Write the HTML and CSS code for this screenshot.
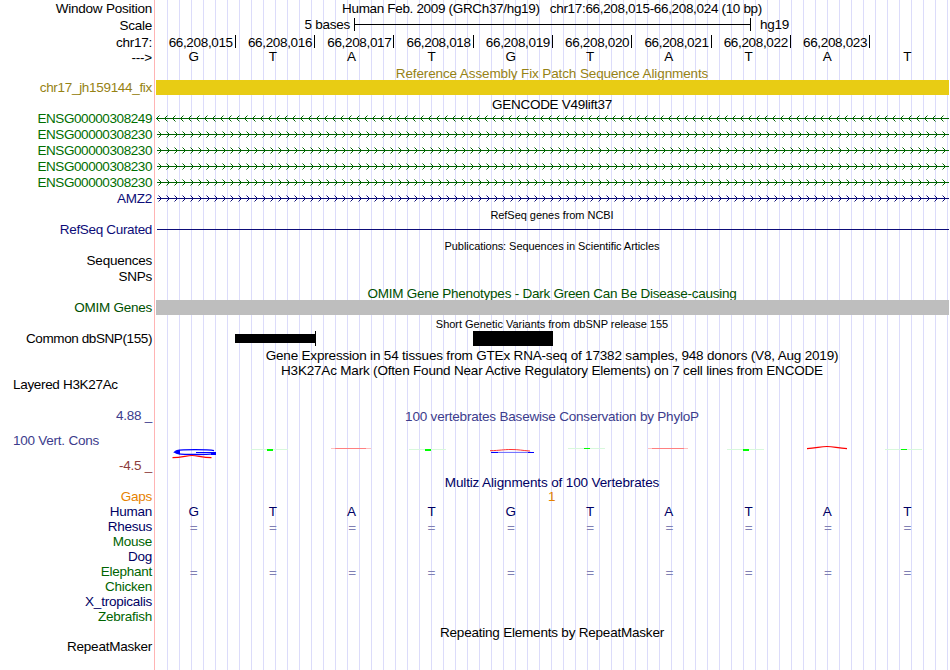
FILE: index.html
```
<!DOCTYPE html>
<html lang="en">
<head>
  <meta charset="UTF-8">
  <title>Human chr17:66,208,015-66,208,024</title>
  <link rel="stylesheet" href="styles.css">
</head>
<body>
  <svg class="defs" width="0" height="0">
    <defs>
      <pattern id="left" width="8" height="7" patternUnits="userSpaceOnUse">
        <path d="M3.5 0.5L0.5 3.5L3.5 6.5" fill="none" stroke="#006400"/>
      </pattern>
      <pattern id="right" width="8" height="7" patternUnits="userSpaceOnUse">
        <path d="M2.5 0.5L5.5 3.5L2.5 6.5" fill="none" stroke="#006400"/>
      </pattern>
      <pattern id="rightBlue" width="8" height="7" patternUnits="userSpaceOnUse">
        <path d="M2.5 0.5L5.5 3.5L2.5 6.5" fill="none" stroke="#0c0c78"/>
      </pattern>
    </defs>
  </svg>

  <div class="browser">
    <!-- position and ruler -->
    <div class="row h17"><div class="label">Window Position</div><div class="title t-pos">Human Feb. 2009 (GRCh37/hg19) &nbsp; chr17:66,208,015-66,208,024 (10 bp)</div></div>
    <div class="row h16"><div class="label low">Scale</div><div class="scale"><span class="bases">5 bases</span><span class="scale-bar"></span><span>hg19</span></div></div>
    <div class="row h17"><div class="label low">chr17:</div>
      <div class="ruler"><span>66,208,015</span><span>66,208,016</span><span>66,208,017</span><span>66,208,018</span><span>66,208,019</span><span>66,208,020</span><span>66,208,021</span><span>66,208,022</span><span>66,208,023</span></div>
    </div>
    <div class="row h16"><div class="label">---&gt;</div>
      <div class="letters top"><span>G</span><span>T</span><span class="a">A</span><span>T</span><span>G</span><span>T</span><span class="a">A</span><span>T</span><span class="a">A</span><span>T</span></div>
    </div>

    <!-- fix patch -->
    <div class="row h14"><div class="label"></div><div class="title low gold t-fix">Reference Assembly Fix Patch Sequence Alignments</div></div>
    <div class="row h15"><div class="label gold t-patch">chr17_jh159144_fix</div><div class="bar yellow"></div></div>

    <!-- genes -->
    <div class="row h16"><div class="label"></div><div class="title t-gencode">GENCODE V49lift37</div></div>
    <div class="row h16"><div class="label green ensg">ENSG00000308249</div><svg class="gene" width="793" height="7"><rect width="793" height="7" fill="url(#left)"/><rect y="3" width="793" height="1" fill="#006400"/></svg></div>
    <div class="row h16"><div class="label green ensg">ENSG00000308230</div><svg class="gene" width="793" height="7"><rect width="793" height="7" fill="url(#right)"/><rect x="1" y="3" width="792" height="1" fill="#006400"/></svg></div>
    <div class="row h16"><div class="label green ensg">ENSG00000308230</div><svg class="gene" width="793" height="7"><rect width="793" height="7" fill="url(#right)"/><rect x="1" y="3" width="792" height="1" fill="#006400"/></svg></div>
    <div class="row h16"><div class="label green ensg">ENSG00000308230</div><svg class="gene" width="793" height="7"><rect width="793" height="7" fill="url(#right)"/><rect x="1" y="3" width="792" height="1" fill="#006400"/></svg></div>
    <div class="row h16"><div class="label green ensg">ENSG00000308230</div><svg class="gene" width="793" height="7"><rect width="793" height="7" fill="url(#right)"/><rect x="1" y="3" width="792" height="1" fill="#006400"/></svg></div>
    <div class="row h16"><div class="label blue">AMZ2</div><svg class="gene" width="793" height="7"><rect width="793" height="7" fill="url(#rightBlue)"/><rect x="1" y="3" width="792" height="1" fill="#0c0c78"/></svg></div>
    <div class="row h15"><div class="label"></div><div class="title low small t-ncbi">RefSeq genes from NCBI</div></div>
    <div class="row h16"><div class="label blue t-curated">RefSeq Curated</div><div class="line"></div></div>
    <div class="row h15"><div class="label"></div><div class="title low small t-pub">Publications: Sequences in Scientific Articles</div></div>
    <div class="row h16"><div class="label">Sequences</div></div>
    <div class="row h16"><div class="label">SNPs</div></div>

    <!-- variants -->
    <div class="row h15"><div class="label"></div><div class="title low omim">OMIM Gene Phenotypes - Dark Green Can Be Disease-causing</div></div>
    <div class="row h15"><div class="label omim">OMIM Genes</div><div class="bar gray"></div></div>
    <div class="row h16"><div class="label"></div><div class="title low small t-snp">Short Genetic Variants from dbSNP release 155</div></div>
    <div class="row h15"><div class="label t-common">Common dbSNP(155)</div><div class="snps"><span class="snp thin"></span><span class="snp tick"></span><span class="snp wide"></span></div></div>
    <div class="row h17"><div class="label"></div><div class="title low t-gtex">Gene Expression in 54 tissues from GTEx RNA-seq of 17382 samples, 948 donors (V8, Aug 2019)</div></div>
    <div class="row h15"><div class="label"></div><div class="title t-h3k">H3K27Ac Mark (Often Found Near Active Regulatory Elements) on 7 cell lines from ENCODE</div></div>
    <div class="row h14"><div class="label start t-layered">Layered H3K27Ac</div></div>

    <!-- conservation -->
    <div class="row cons">
      <div class="cons-labels"><span class="phylo">4.88 _</span><span class="phylo start">100 Vert. Cons</span><span class="brown">-4.5 _</span></div>
      <div class="cons-plot">
        <div class="title phylo t-phylo">100 vertebrates Basewise Conservation by PhyloP</div>
        <svg class="logo" width="794" height="16" viewBox="156 444 794 16">
          <g fill="none">
            <path d="M214 450.6C208 449.3 182 449.3 177 450.6C174 451.5 174 452.5 178 453.6C184 454.8 207 454.8 213 453.6" stroke="#00f" stroke-width="1.3"/>
            <path d="M173 452.2L180 449.8V454.6Z" fill="#00f"/>
            <path d="M196 452.5H215" stroke="#00f"/>
            <path d="M211 452H216V455H211Z" fill="#00f"/>
            <path d="M172.5 457.6C182 457.3 187 455.5 192 455.5C197 455.5 202 457.3 211.5 457.6" stroke="#f00" stroke-width="1.2"/>
            <path d="M331 448.5H371M648 448.5H688" stroke="#ffc0c0"/>
            <path d="M335 448.5H366M652 448.5H684" stroke="#ff8080"/>
            <path d="M251 449.5H288M409 449.5H446M727 449.5H764M885 449.5H922M568 448.5H605" stroke="#d8f8dc"/>
            <path d="M267 450H273M425 450H431M743 450H749" stroke="#0f0" stroke-width="2"/>
            <path d="M584 448.5H590M901 449.5H907" stroke="#0f0"/>
            <path d="M491 452.4H531" stroke="#6666ff"/>
            <path d="M528 452.5H534M491 452.5H498" stroke="#00f"/>
            <path d="M490 450.7C500 450.5 503 449.5 511 449.5C519 449.5 522 450.5 530 451" stroke="#f33"/>
            <path d="M807 448.6C816 448.4 820 446.5 827 446.5C834 446.5 838 448.4 847 448.6" stroke="#f00" stroke-width="1.2"/>
          </g>
        </svg>
      </div>
    </div>

    <!-- multiz -->
    <div class="row h14"><div class="label"></div><div class="title low navy t-multiz">Multiz Alignments of 100 Vertebrates</div></div>
    <div class="row h15"><div class="label orange">Gaps</div><div class="gap-count orange">1</div></div>
    <div class="row h15"><div class="label navy">Human</div>
      <div class="letters navy"><span>G</span><span>T</span><span class="a">A</span><span>T</span><span>G</span><span>T</span><span class="a">A</span><span>T</span><span class="a">A</span><span>T</span></div>
    </div>
    <div class="row h15"><div class="label navy">Rhesus</div>
      <div class="letters equal"><span>=</span><span>=</span><span>=</span><span>=</span><span>=</span><span>=</span><span>=</span><span>=</span><span>=</span><span>=</span></div>
    </div>
    <div class="row h15"><div class="label forest">Mouse</div></div>
    <div class="row h15"><div class="label navy">Dog</div></div>
    <div class="row h15"><div class="label forest">Elephant</div>
      <div class="letters equal"><span>=</span><span>=</span><span>=</span><span>=</span><span>=</span><span>=</span><span>=</span><span>=</span><span>=</span><span>=</span></div>
    </div>
    <div class="row h15"><div class="label forest">Chicken</div></div>
    <div class="row h15"><div class="label navy">X_tropicalis</div></div>
    <div class="row h15"><div class="label forest">Zebrafish</div></div>
    <div class="row h15"><div class="label"></div><div class="title low t-repeat">Repeating Elements by RepeatMasker</div></div>
    <div class="row h15"><div class="label">RepeatMasker</div></div>
  </div>
</body>
</html>
```
FILE: styles.css
```
body {
  margin: 0;
  background: #fff;
  font-family: "Liberation Sans", Arial, sans-serif;
  font-size: 13.5px;
  letter-spacing: -0.24px;
  color: #000;
}
.defs {
  display: block;
}
.browser {
  width: 950px;
  height: 670px;
  overflow: hidden;
  background:
    linear-gradient(#ffb4b4, #ffb4b4) 154px 0 / 1px 100% no-repeat,
    repeating-linear-gradient(90deg, #dcdcfa 0 1px, transparent 1px 12px) 167px 0 / 783px 100% no-repeat;
}
.row {
  display: grid;
  grid-template-columns: 152px 794px;
  column-gap: 4px;
  white-space: nowrap;
}
.h14 { height: 14px; line-height: 14px; }
.h15 { height: 15px; line-height: 15px; }
.h16 { height: 16px; line-height: 16px; }
.h17 { height: 17px; line-height: 17px; }
.label {
  text-align: right;
}
.start {
  text-align: left;
  padding-left: 13px;
}
.title {
  text-align: center;
  width: 792px;
}
.low {
  padding-top: 1px;
}
.small {
  font-size: 11px;
}

/* spacing per text */
.t-pos { letter-spacing: -0.33px; }
.t-fix { letter-spacing: -0.12px; }
.t-patch { letter-spacing: -0.31px; }
.t-gencode { letter-spacing: -0.26px; padding-top: 2px; }
.t-ncbi { letter-spacing: -0.04px; }
.t-curated { letter-spacing: -0.33px; }
.t-pub { letter-spacing: -0.06px; }
.t-snp { letter-spacing: -0.02px; }
.t-common { letter-spacing: -0.4px; }
.t-gtex { letter-spacing: -0.18px; }
.t-h3k { letter-spacing: -0.19px; }
.t-layered { letter-spacing: -0.32px; }
.t-phylo { letter-spacing: -0.2px; }
.t-multiz { letter-spacing: -0.13px; }
.t-repeat { letter-spacing: -0.21px; }
.ensg { letter-spacing: -0.42px; }

/* ruler */
.scale {
  display: flex;
}
.bases {
  width: 194px;
  margin-right: 4px;
  text-align: right;
}
.scale-bar {
  width: 395px;
  height: 13px;
  margin: 1px 9px 0 0;
  border: solid #000;
  border-width: 0 1px;
  background: linear-gradient(#000, #000) 0 6px / 100% 1px no-repeat;
}
.ruler {
  display: grid;
  grid-template-columns: repeat(9, 79.3px);
  padding-left: 0.5px;
  letter-spacing: -0.34px;
}
.ruler span {
  height: 13px;
  margin-top: 2px;
  padding-right: 2px;
  line-height: 15px;
  text-align: right;
  border-right: 1px solid #000;
}
.letters {
  display: grid;
  grid-template-columns: repeat(10, 79.3px);
  margin-left: -2px;
  text-align: center;
  letter-spacing: 0;
}
.a {
  padding-right: 1.5px;
}
.top {
  margin-top: -1px;
}
.equal {
  color: #8080b4;
  margin-top: 1px;
}

/* track items */
.bar {
  width: 793px;
  height: 15px;
}
.yellow { background: #e8cc14; }
.gray { background: #bebebe; }
.gene {
  display: block;
  margin-top: 4px;
}
.line {
  height: 1px;
  margin: 7px 1px 0;
  background: #0c0c78;
}
.snps {
  display: flex;
  align-items: center;
}
.snp { background: #000; }
.thin {
  width: 80px;
  height: 9px;
  margin-left: 79px;
}
.tick {
  width: 1px;
  height: 15px;
}
.wide {
  width: 80px;
  height: 15px;
  margin-left: 157px;
}
.gap-count {
  padding-left: 392px;
}

/* conservation */
.cons {
  height: 83px;
}
.cons-labels {
  display: flex;
  flex-direction: column;
  gap: 10px;
  padding-top: 16px;
  line-height: 15px;
  text-align: right;
}
.cons-plot {
  padding-top: 17px;
  line-height: 15px;
}
.logo {
  display: block;
  margin-top: 20px;
}

.gold { color: #968214; }
.green { color: #006e00; }
.blue { color: #0c0c78; }
.omim { color: #005000; }
.phylo { color: #3c3c8c; }
.brown { color: #8c3c3c; }
.navy { color: #000064; }
.orange { color: #e68200; }
.forest { color: #006400; }
```
